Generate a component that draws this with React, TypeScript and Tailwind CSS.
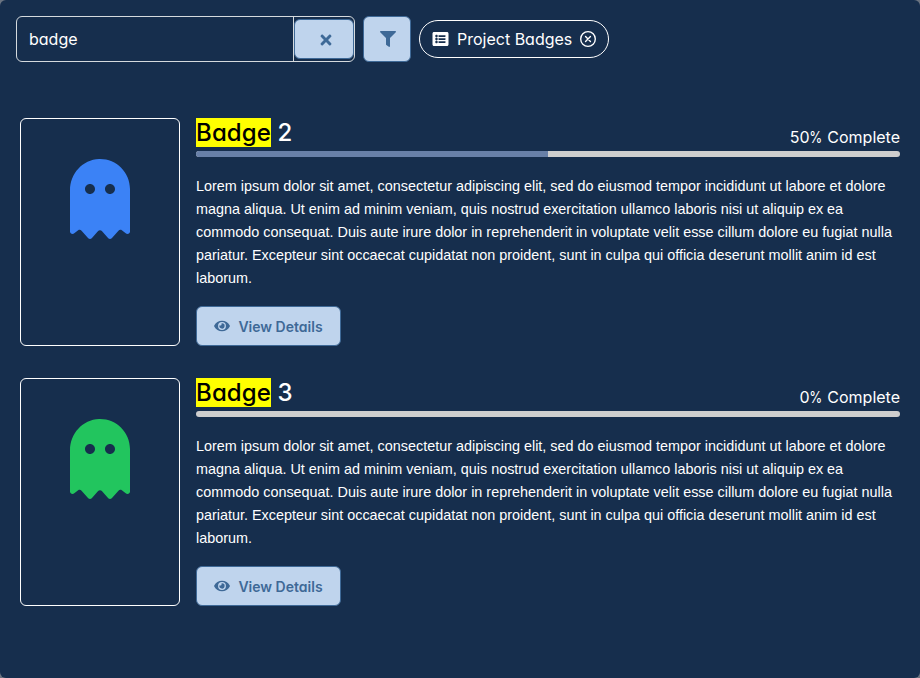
import type { ReactNode } from "react";
import { FaEye, FaFilter, FaGhost, FaListAlt, FaTimes } from "react-icons/fa";

const description =
  "Lorem ipsum dolor sit amet, consectetur adipiscing elit, sed do eiusmod tempor incididunt ut labore et dolore magna aliqua. Ut enim ad minim veniam, quis nostrud exercitation ullamco laboris nisi ut aliquip ex ea commodo consequat. Duis aute irure dolor in reprehenderit in voluptate velit esse cillum dolore eu fugiat nulla pariatur. Excepteur sint occaecat cupidatat non proident, sunt in culpa qui officia deserunt mollit anim id est laborum.";

const badges = [
  { number: 2, progress: 50, color: "text-[#3b82f6]" },
  { number: 3, progress: 0, color: "text-[#22c55e]" },
];

function Button({ className, children }: { className: string; children: ReactNode }) {
  return (
    <button
      className={`flex items-center justify-center rounded-md border border-[#3e6997] bg-[#bfd4ed] text-[#3e6997] ${className}`}
    >
      {children}
    </button>
  );
}

function RemoveIcon() {
  return (
    <svg className="h-4 w-4 shrink-0" viewBox="0 0 14 14" fill="none" stroke="currentColor" strokeWidth="1.2" strokeLinecap="round">
      <circle cx="7" cy="7" r="6.4" />
      <path d="M4.85 4.85l4.3 4.3M9.15 4.85l-4.3 4.3" />
    </svg>
  );
}

function BadgeRow({ number, progress, color }: { number: number; progress: number; color: string }) {
  return (
    <article className="flex h-[228px] gap-4">
      <div className="flex w-40 shrink-0 justify-center rounded-md border border-white pt-10">
        <FaGhost className={`h-20 w-[60px] ${color}`} />
      </div>
      <div className="min-w-0 flex-1">
        <div className="flex h-[33px] items-start justify-between">
          <h2 className="text-2xl leading-[29px] font-medium">
            <mark className="bg-[#ffff00] tracking-[0.12px] text-black">Badge</mark> {number}
          </h2>
          <span className="pt-[7px] text-base leading-6">
            {progress}
            <span className="-mx-[1.25px] inline-block scale-x-[0.83]">%</span> Complete
          </span>
        </div>
        <div className="h-1.5 overflow-hidden rounded-full bg-[#cecece]">
          <div className="h-full bg-[#6880a8]" style={{ width: `${progress}%` }} />
        </div>
        <p className="mt-[18px] font-['Liberation_Sans',Arial,sans-serif] text-[14.4px] leading-[23px]">
          {description}
        </p>
        <Button className="mt-4 h-10 w-[145px] gap-2 text-sm font-semibold">
          <FaEye className="h-3.5 w-4" />
          <span className="pt-0.5">View Details</span>
        </Button>
      </div>
    </article>
  );
}

export default function App() {
  return (
    <div className="h-[678px] bg-[#6b7481]">
      <main className="h-full rounded-md bg-[#162e4d] font-['Inter',sans-serif] text-white [font-feature-settings:'cv02','cv03','cv04','cv11']">
        <header className="flex items-start gap-2 px-4 pt-4">
          <div className="flex h-[46px] w-[339px] rounded-md border border-[#d5dade]">
            <input
              className="h-full w-[277px] border-r border-[#d5dade] bg-transparent px-3 text-base outline-none"
              defaultValue="badge"
            />
            <Button className="mt-0.5 h-10 w-[60px] pt-0.5 pl-1">
              <FaTimes className="h-4 w-4" />
            </Button>
          </div>
          <Button className="h-[46px] w-12 pl-px">
            <FaFilter className="h-4 w-4" />
          </Button>
          <div className="mt-1 flex h-[38px] w-[190px] items-center gap-2 rounded-[19px] border border-white px-3">
            <FaListAlt className="h-4 w-[17px] shrink-0" />
            <span className="whitespace-nowrap">Project Badges</span>
            <RemoveIcon />
          </div>
        </header>
        <section className="flex flex-col gap-8 px-5 pt-14">
          {badges.map((badge) => (
            <BadgeRow key={badge.number} {...badge} />
          ))}
        </section>
      </main>
    </div>
  );
}
